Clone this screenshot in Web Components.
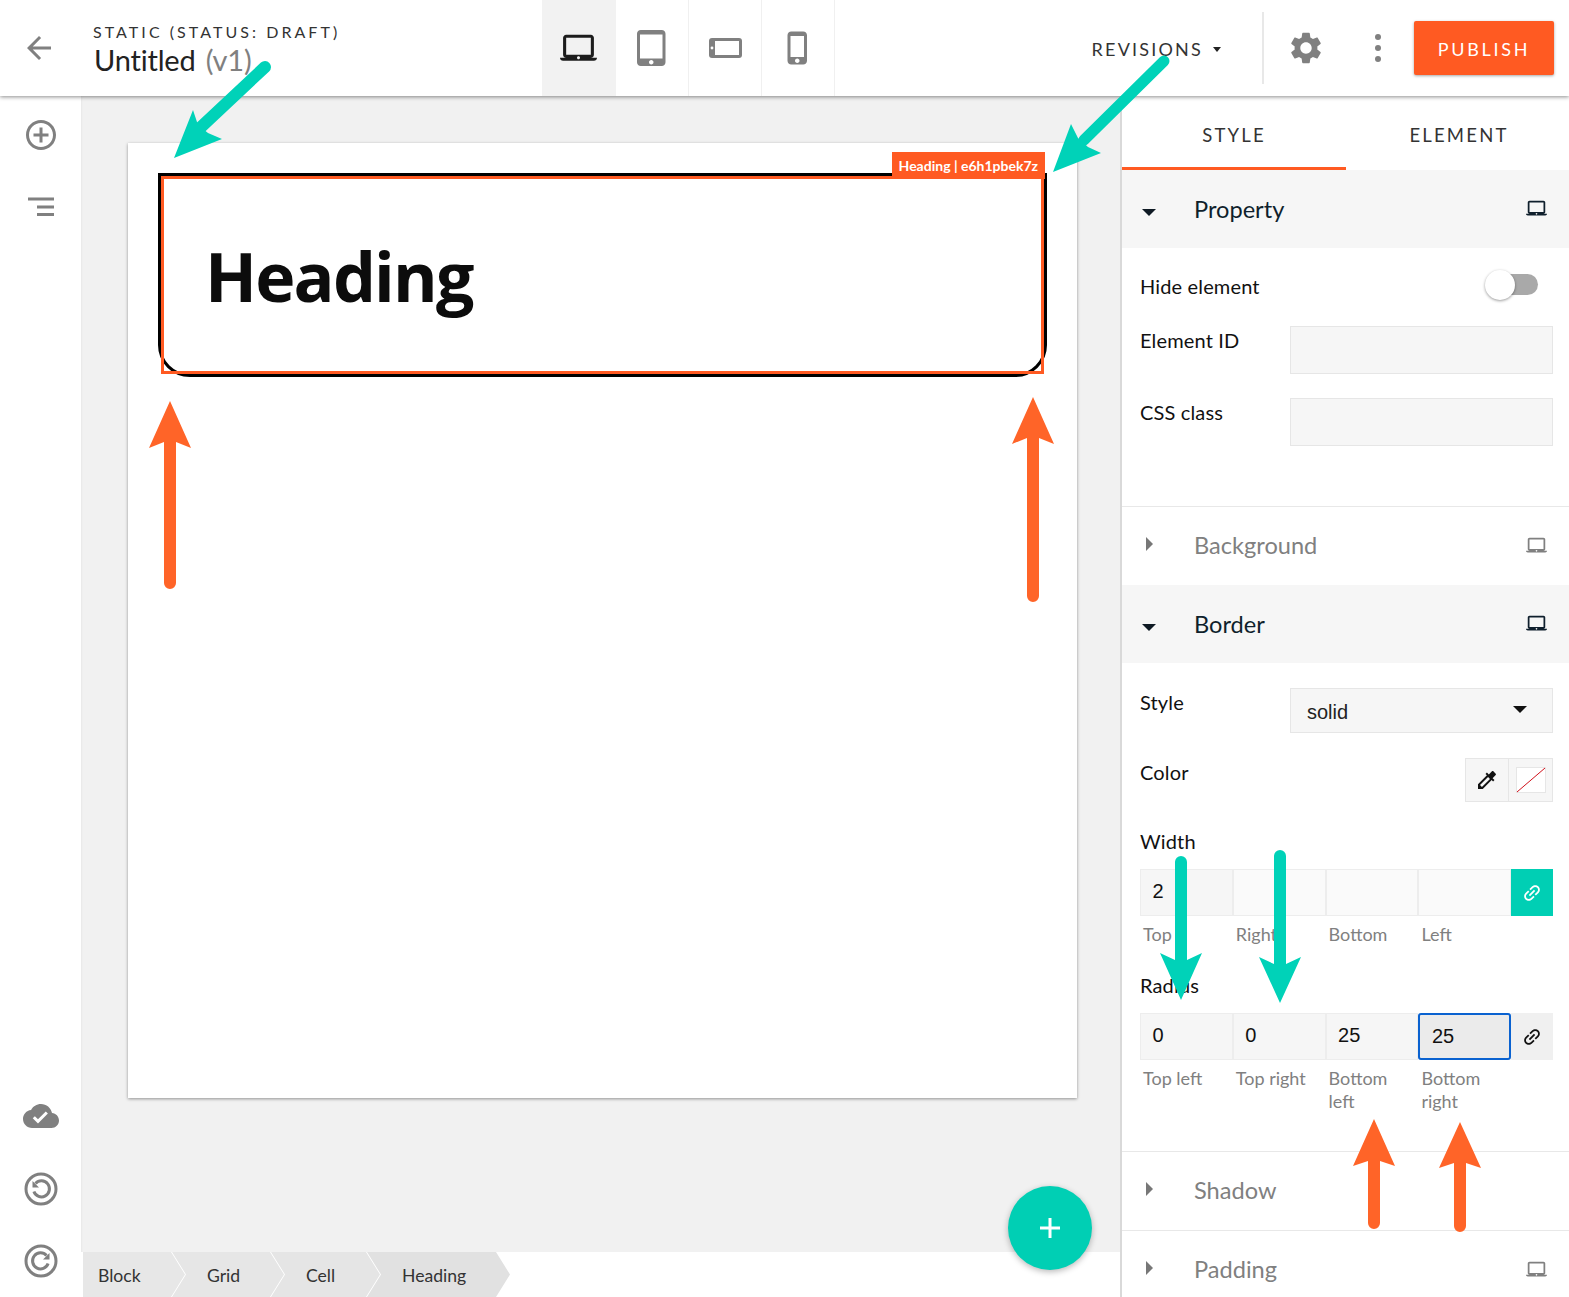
<!DOCTYPE html>
<html>
<head>
<meta charset="utf-8">
<title>Editor</title>
<style>
html,body{margin:0;height:1297px;overflow:hidden;background:#fff;}
body{font-family:"Lato","Noto Sans",sans-serif;color:#111;}
</style>
</head>
<body>
<editor-app></editor-app>
<script>
const UI_FONT = '"Lato","Noto Sans",sans-serif';

// iconos material, todos en caja de 24
const ICONOS = {
    back: 'M20 11H7.83l5.59-5.59L12 4l-8 8 8 8 1.41-1.41L7.83 13H20v-2z',
    add: 'M13 7h-2v4H7v2h4v4h2v-4h4v-2h-4V7zm-1-5C6.48 2 2 6.48 2 12s4.48 10 10 10 10-4.48 10-10S17.52 2 12 2zm0 18c-4.41 0-8-3.59-8-8s3.59-8 8-8 8 3.59 8 8-3.59 8-8 8z',
    laptop: 'M20 18c1.1 0 1.99-.9 1.99-2L22 5c0-1.1-.9-2-2-2H4c-1.1 0-2 .9-2 2v11c0 1.1.9 2 2 2H0c0 1.1.9 2 2 2h20c1.1 0 2-.9 2-2h-4zM4 5h16v11H4V5zm8 14c-.55 0-1-.45-1-1s.45-1 1-1 1 .45 1 1-.45 1-1 1z',
    tablet: 'M18.5 0h-14C3.12 0 2 1.12 2 2.5v19C2 22.88 3.12 24 4.5 24h14c1.38 0 2.5-1.12 2.5-2.5v-19C21 1.12 19.88 0 18.5 0zm-7 23c-.83 0-1.5-.67-1.5-1.5s.67-1.5 1.5-1.5 1.5.67 1.5 1.5-.67 1.5-1.5 1.5zm7.5-4H4V3h15v16z',
    phone: 'M15.5 1h-8C6.12 1 5 2.12 5 3.5v17C5 21.88 6.12 23 7.5 23h8c1.38 0 2.5-1.12 2.5-2.5v-17C18 2.12 16.88 1 15.5 1zm-4 21c-.83 0-1.5-.67-1.5-1.5s.67-1.5 1.5-1.5 1.5.67 1.5 1.5-.67 1.5-1.5 1.5zm4.5-4H7V4h9v14z',
    gear: 'M19.14 12.94c.04-.3.06-.61.06-.94 0-.32-.02-.64-.07-.94l2.03-1.58c.18-.14.23-.41.12-.61l-1.92-3.32c-.12-.22-.37-.29-.59-.22l-2.39.96c-.5-.38-1.03-.7-1.62-.94l-.36-2.54c-.04-.24-.24-.41-.48-.41h-3.84c-.24 0-.43.17-.47.41l-.36 2.54c-.59.24-1.13.57-1.62.94l-2.39-.96c-.22-.08-.47 0-.59.22L2.74 8.87c-.12.21-.08.47.12.61l2.03 1.58c-.05.3-.09.63-.09.94s.02.64.07.94l-2.03 1.58c-.18.14-.23.41-.12.61l1.92 3.32c.12.22.37.29.59.22l2.39-.96c.5.38 1.03.7 1.62.94l.36 2.54c.05.24.24.41.48.41h3.84c.24 0 .44-.17.47-.41l.36-2.54c.59-.24 1.13-.56 1.62-.94l2.39.96c.22.08.47 0 .59-.22l1.92-3.32c.12-.22.07-.47-.12-.61l-2.01-1.58zM12 15.6c-1.98 0-3.6-1.62-3.6-3.6s1.62-3.6 3.6-3.6 3.6 1.62 3.6 3.6-1.62 3.6-3.6 3.6z',
    cloud: 'M19.35 10.04C18.67 6.59 15.64 4 12 4 9.11 4 6.6 5.64 5.35 8.04 2.34 8.36 0 10.91 0 14c0 3.31 2.69 6 6 6h13c2.76 0 5-2.24 5-5 0-2.64-2.05-4.78-4.65-4.96zM10 17l-3.5-3.5 1.41-1.41L10 14.17 15.18 9l1.41 1.41L10 17z',
    dropper: 'M20.71 5.63l-2.34-2.34c-.39-.39-1.02-.39-1.41 0l-3.12 3.12-1.93-1.91-1.41 1.41 1.42 1.42L3 16.25V21h4.75l8.92-8.92 1.42 1.42 1.41-1.41-1.92-1.92 3.12-3.12c.4-.4.4-1.03.01-1.42zM6.92 19L5 17.08l8.06-8.06 1.92 1.92L6.92 19z',
    link: 'M3.9 12c0-1.71 1.39-3.1 3.1-3.1h4V7H7c-2.76 0-5 2.24-5 5s2.24 5 5 5h4v-1.9H7c-1.71 0-3.1-1.39-3.1-3.1zM8 13h8v-2H8v2zm9-6h-4v1.9h4c1.71 0 3.1 1.39 3.1 3.1s-1.39 3.1-3.1 3.1h-4V17h4c2.76 0 5-2.24 5-5s-2.24-5-5-5z'
};

class UiIcon extends HTMLElement {
    connectedCallback(){
        const size = this.getAttribute('size') || 24;
        const color = this.getAttribute('color') || '#808080';
        const rot = this.getAttribute('rotate') || 0;
        const d = ICONOS[this.getAttribute('name')];
        const shadow = this.attachShadow({mode: 'open'});
        shadow.innerHTML = `
            <style>
                :host{display:inline-flex;width:${size}px;height:${size}px;flex:none;}
                svg{width:100%;height:100%;display:block;transform:rotate(${rot}deg);}
            </style>
            <svg viewBox="0 0 24 24"><path fill="${color}" d="${d}"/></svg>`;
    }
}
customElements.define('ui-icon', UiIcon);

const templateHeader = document.createElement('template');
templateHeader.innerHTML = `
    <style>
        :host{display:flex;height:96px;background:#fff;box-shadow:0 1px 4px rgba(0,0,0,.45);position:relative;z-index:2;align-items:stretch;}
        .back{width:93px;display:flex;align-items:center;padding-left:21px;box-sizing:border-box;}
        .titulo{width:449px;padding-top:21px;box-sizing:border-box;}
        .status{font-size:16px;line-height:22px;letter-spacing:3.05px;color:#333;white-space:nowrap;}
        .nombre{font-size:29px;line-height:34px;letter-spacing:-.2px;color:#222;margin-left:1px;white-space:nowrap;}
        .nombre span{color:#808080;margin-left:3px;}
        .devices{display:flex;}
        .dev{width:72px;border-right:1px solid #f0f0f0;display:flex;align-items:center;justify-content:center;}
        .dev.on{width:73px;background:#f2f2f2;border-right-color:#f2f2f2;}
        .resto{flex:1;display:flex;align-items:center;justify-content:flex-end;}
        .rev{font-size:18px;letter-spacing:2.2px;padding-top:2px;color:#333;display:flex;align-items:center;gap:10px;white-space:nowrap;margin-right:41px;}
        .rev i{width:0;height:0;border:4.5px solid transparent;border-top:5px solid #222;border-bottom:0;}
        .sep{width:2px;height:72px;background:#e8e8e8;margin-right:23px;}
        .dots{margin:0 33px 0 50px;display:flex;flex-direction:column;gap:5px;}
        .dots i{width:6px;height:6px;border-radius:50%;background:#808080;}
        .pub{width:140px;height:54px;box-sizing:border-box;padding-top:2px;margin-right:15px;background:#ff5a22;border-radius:2px;color:#fff;font-size:18px;letter-spacing:2.7px;display:flex;align-items:center;justify-content:center;box-shadow:0 1px 3px rgba(0,0,0,.35);}
        svg{display:block;}
    </style>
    <div class="back"><ui-icon name="back" size="36"></ui-icon></div>
    <div class="titulo">
        <div class="status">STATIC (STATUS: DRAFT)</div>
        <div class="nombre">Untitled <span>(v1)</span></div>
    </div>
    <div class="devices">
        <div class="dev on"><ui-icon name="laptop" size="37" color="#1c1c1c"></ui-icon></div>
        <div class="dev"><ui-icon name="tablet" size="36"></ui-icon></div>
        <div class="dev"><svg width="33" height="20" viewBox="0 0 33 20"><rect width="33" height="20" rx="3" fill="#808080"/><rect x="6" y="3" width="24" height="14" fill="#fff"/><circle cx="3" cy="10" r="1.4" fill="#fff"/></svg></div>
        <div class="dev"><ui-icon name="phone" size="36"></ui-icon></div>
    </div>
    <div class="resto">
        <div class="rev">REVISIONS <i></i></div>
        <div class="sep"></div>
        <ui-icon name="gear" size="38"></ui-icon>
        <div class="dots"><i></i><i></i><i></i></div>
        <div class="pub">PUBLISH</div>
    </div>`;

class EditorHeader extends HTMLElement {
    connectedCallback(){
        this.attachShadow({mode: 'open'}).appendChild(templateHeader.content.cloneNode(true));
    }
}
customElements.define('editor-header', EditorHeader);

const templateRail = document.createElement('template');
templateRail.innerHTML = `
    <style>
        :host{display:flex;flex-direction:column;width:81px;background:#fff;align-items:center;box-sizing:border-box;padding:21px 0 10px;}
        .it{height:72px;width:36px;display:flex;align-items:flex-start;justify-content:center;}
        .abajo{margin-top:auto;}
        svg{display:block;}
    </style>
    <div class="it"><ui-icon name="add" size="36"></ui-icon></div>
    <div class="it">
        <svg width="36" height="36" viewBox="0 0 36 36"><path d="M5 10h26M14 18h17M14 25.5h17" fill="none" stroke="#808080" stroke-width="3"/></svg>
    </div>
    <div class="abajo">
        <div class="it" style="height:73px"><ui-icon name="cloud" size="36"></ui-icon></div>
        <div class="it"><svg width="36" height="36" viewBox="0 0 36 36" fill="none" stroke="#808080" stroke-width="3"><circle cx="18" cy="18" r="15"/><path d="M12.5 12.5a8 8 0 1 1-1.6 8"/><path d="M9.5 10v6.5H16" stroke="none" fill="#808080"/></svg></div>
        <div class="it" style="height:44px"><svg width="36" height="36" viewBox="0 0 36 36" fill="none" stroke="#808080" stroke-width="3"><circle cx="18" cy="18" r="15"/><path d="M23.5 12.5a8 8 0 1 0 1.6 8"/><path d="M26.5 10v6.5H20" stroke="none" fill="#808080"/></svg></div>
    </div>`;

class EditorRail extends HTMLElement {
    connectedCallback(){
        this.attachShadow({mode: 'open'}).appendChild(templateRail.content.cloneNode(true));
    }
}
customElements.define('editor-rail', EditorRail);

const templateHeading = document.createElement('template');
templateHeading.innerHTML = `
    <style>
        :host{display:block;position:relative;height:204px;box-sizing:border-box;border:3px solid #000;border-radius:0 0 32px 32px;}
        h1{margin:0;height:100%;display:flex;align-items:center;padding-left:44px;padding-top:2px;box-sizing:border-box;font:700 68px/1 "Open Sans",sans-serif;color:#0c0c0c;letter-spacing:-1.8px;}
        .marco{position:absolute;inset:0;border:3px solid #ff5a22;pointer-events:none;}
        .tag{position:absolute;right:-1px;top:-24px;height:27px;padding:0 7px;background:#ff5a22;color:#fff;font-size:14px;font-weight:700;line-height:27px;white-space:nowrap;}
    </style>
    <h1>Heading</h1>
    <div class="marco"></div>
    <div class="tag">Heading | e6h1pbek7z</div>`;

class HeadingBlock extends HTMLElement {
    connectedCallback(){
        this.attachShadow({mode: 'open'}).appendChild(templateHeading.content.cloneNode(true));
    }
}
customElements.define('heading-block', HeadingBlock);

const templateCrumbs = document.createElement('template');
templateCrumbs.innerHTML = `
    <style>
        :host{display:flex;height:45px;background:#fff;padding-left:2px;flex:none;}
        .c{height:45px;box-sizing:border-box;font-size:17.6px;line-height:47px;color:#333;margin-left:-13px;
           clip-path:polygon(0 0,calc(100% - 14px) 0,100% 50%,calc(100% - 14px) 100%,0 100%,14px 50%);}
        .c.primero{margin-left:0;width:102px;padding-left:15px;background:#e7e7e7;clip-path:polygon(0 0,calc(100% - 14px) 0,100% 50%,calc(100% - 14px) 100%,0 100%);}
    </style>
    <div class="c primero">Block</div>
    <div class="c" style="width:112px;padding-left:35px;background:#e6e6e6">Grid</div>
    <div class="c" style="width:109px;padding-left:35px;background:#e5e5e5">Cell</div>
    <div class="c" style="width:143px;padding-left:35px;background:#e1e1e1">Heading</div>`;

class CrumbBar extends HTMLElement {
    connectedCallback(){
        this.attachShadow({mode: 'open'}).appendChild(templateCrumbs.content.cloneNode(true));
    }
}
customElements.define('crumb-bar', CrumbBar);

const templateCanvas = document.createElement('template');
templateCanvas.innerHTML = `
    <style>
        :host{display:flex;flex-direction:column;flex:1;min-width:0;background:#f1f1f1;position:relative;box-shadow:inset 1px 0 2px rgba(0,0,0,.04);}
        .zona{flex:1;padding:47px 43px 0 47px;}
        .hoja{height:955px;background:#fff;box-shadow:0 1px 3px rgba(0,0,0,.4);padding:30px 30px 0;box-sizing:border-box;}
        .fab{position:absolute;left:927px;top:1090px;width:84px;height:84px;border-radius:50%;background:#00cfb4;box-shadow:0 2px 6px rgba(0,0,0,.28);display:flex;align-items:center;justify-content:center;}
        .fab svg{display:block;}
    </style>
    <div class="zona"><div class="hoja"><heading-block></heading-block></div></div>
    <crumb-bar></crumb-bar>
    <div class="fab"><svg width="24" height="24" viewBox="0 0 24 24"><path d="M2 12h20M12 2v20" stroke="#fff" stroke-width="3"/></svg></div>`;

class EditorCanvas extends HTMLElement {
    connectedCallback(){
        this.attachShadow({mode: 'open'}).appendChild(templateCanvas.content.cloneNode(true));
    }
}
customElements.define('editor-canvas', EditorCanvas);

class PropSection extends HTMLElement {
    connectedCallback(){
        const abierto = this.hasAttribute('open');
        const sinDevice = this.hasAttribute('nodevice');
        const titulo = this.getAttribute('title');
        this.removeAttribute('title');
        const shadow = this.attachShadow({mode: 'open'});
        shadow.innerHTML = `
            <style>
                :host{display:block;}
                .cab{height:${abierto ? 78 : 79}px;display:flex;align-items:center;box-sizing:border-box;padding:0 22px ${abierto ? 1 : 2}px 20px;background:${abierto ? '#f6f6f6' : '#fff'};border-top:${abierto ? '0' : '1px solid #e8e8e8'};}
                .caret{width:52px;flex:none;}
                .caret i{display:block;width:0;height:0;}
                .caret i.ab{border:7px solid transparent;border-top:7px solid #0f1a24;border-bottom:0;margin-top:7px;}
                .caret i.ce{border:7px solid transparent;border-left:7px solid #777;border-right:0;margin:-3px 0 0 4px;}
                .nom{flex:1;font-size:23.6px;color:${abierto ? '#0f1f2c' : '#808080'};}
            </style>
            <div class="cab">
                <div class="caret"><i class="${abierto ? 'ab' : 'ce'}"></i></div>
                <div class="nom">${titulo}</div>
                ${sinDevice ? '' : `<ui-icon name="laptop" size="21" color="${abierto ? '#0f1f2c' : '#808080'}"></ui-icon>`}
            </div>
            <slot></slot>`;
    }
}
customElements.define('prop-section', PropSection);

class PropField extends HTMLElement {
    connectedCallback(){
        const alto = this.getAttribute('h') || 48;
        const shadow = this.attachShadow({mode: 'open'});
        shadow.innerHTML = `
            <style>
                :host{display:flex;font-size:20px;line-height:28px;letter-spacing:.15px;color:#111;}
                .lab{width:150px;flex:none;}
                .caja{flex:1;height:${alto}px;box-sizing:border-box;background:#f6f6f6;border:1px solid #e6e6e6;}
            </style>
            <div class="lab">${this.getAttribute('label')}</div>
            <div class="caja"><slot></slot></div>`;
    }
}
customElements.define('prop-field', PropField);

class QuadInput extends HTMLElement {
    connectedCallback(){
        const valores = this.getAttribute('values').split(',');
        const textos = this.getAttribute('captions').split(',');
        const enlazado = this.hasAttribute('linked');
        const foco = parseInt(this.getAttribute('focus') ?? '-1');
        const shadow = this.attachShadow({mode: 'open'});
        const celdas = valores.map((v, i) => `<div class="cel ${v ? 'llena' : ''} ${i === foco ? 'foco' : ''}">${v}</div>`).join('');
        const caps = textos.map(t => `<div class="cap">${t}</div>`).join('');
        shadow.innerHTML = `
            <style>
                :host{display:block;}
                .fila{display:grid;grid-template-columns:92.8px 92.8px 92.8px 92.8px 41.8px;height:47px;}
                .cel{box-sizing:border-box;border:1.5px solid #ededed;background:#fafafa;font:20px/43px "Liberation Sans",sans-serif;color:#111;padding-left:11.5px;}
                .cel.llena{background:#f6f6f6;}
                .cel.foco{border:2px solid #0a62d0;border-radius:3px;background:#ebebeb;line-height:42px;}
                .lnk{display:flex;align-items:center;justify-content:center;background:${enlazado ? '#00cfb4' : '#f0f0f0'};}
                .caps{display:grid;grid-template-columns:92.8px 92.8px 92.8px 92.8px 41.8px;margin-top:7px;}
                .cap{padding:0 14px 0 3px;font-size:18px;line-height:23px;color:#808080;}
            </style>
            <div class="fila">${celdas}<div class="lnk"><ui-icon name="link" size="22" rotate="-45" color="${enlazado ? '#fff' : '#111'}"></ui-icon></div></div>
            <div class="caps">${caps}</div>`;
    }
}
customElements.define('quad-input', QuadInput);

const templatePanel = document.createElement('template');
templatePanel.innerHTML = `
    <style>
        :host{display:block;width:449px;flex:none;background:#fff;border-left:2px solid #d9d9d9;box-sizing:border-box;overflow:hidden;box-shadow:-1px 0 2px rgba(0,0,0,.06);}
        .tabs{display:flex;height:74px;}
        .tab{flex:1;text-align:center;font-size:18.5px;letter-spacing:2.2px;line-height:78px;color:#333;box-sizing:border-box;}
        .tab.on{flex:0 0 224px;border-bottom:3px solid #ff5a22;}
        .tab + .tab{padding-left:3px;}
        .cuerpo{padding:0 16px 0 18px;}
        .hide{display:flex;align-items:center;justify-content:space-between;height:38px;padding-top:19px;margin-bottom:21px;font-size:20px;letter-spacing:.15px;color:#111;}
        .sw{position:relative;width:53px;height:22px;margin-right:15px;}
        .sw .pista{position:absolute;right:0;top:-1px;width:40px;height:21px;border-radius:11px;background:#a9a9a9;}
        .sw .bola{position:absolute;left:0;top:-5px;width:30px;height:30px;border-radius:50%;background:#fff;box-shadow:0 1px 3px rgba(0,0,0,.4);}
        prop-field + prop-field{margin-top:24px;}
        .sel{display:flex;align-items:center;justify-content:space-between;height:100%;box-sizing:border-box;padding:4px 25px 0 16px;font:20px "Liberation Sans",sans-serif;color:#222;letter-spacing:0;}
        .sel i{width:0;height:0;border:7.5px solid transparent;border-top:7px solid #111;border-bottom:0;margin-top:-6px;}
        .color{display:flex;justify-content:space-between;font-size:20px;line-height:28px;letter-spacing:.15px;margin-top:25px;height:44px;}
        .pares{display:flex;}
        .par{box-sizing:border-box;width:44px;height:44px;background:#f6f6f6;border:1px solid #e6e6e6;display:flex;align-items:center;justify-content:center;}
        .par + .par{border-left:0;}
        .tit{font-size:20px;line-height:30px;letter-spacing:.15px;color:#111;}
    </style>
    <div class="tabs">
        <div class="tab on">STYLE</div>
        <div class="tab">ELEMENT</div>
    </div>
    <prop-section title="Property" open>
        <div class="cuerpo" style="height:258px">
            <div class="hide"><span>Hide element</span><div class="sw"><div class="pista"></div><div class="bola"></div></div></div>
            <prop-field label="Element ID"></prop-field>
            <prop-field label="CSS class"></prop-field>
        </div>
    </prop-section>
    <prop-section title="Background"></prop-section>
    <prop-section title="Border" open>
        <div class="cuerpo" style="height:488px;padding-top:25px;box-sizing:border-box">
            <prop-field label="Style" h="45"><div class="sel">solid<i></i></div></prop-field>
            <div class="color">
                <span>Color</span>
                <div class="pares">
                    <div class="par"><ui-icon name="dropper" size="24" color="#111"></ui-icon></div>
                    <div class="par"><svg width="30" height="26" viewBox="0 0 30 26"><rect x=".5" y=".5" width="29" height="25" fill="#fff" stroke="#e6e6e6"/><path d="M1 25L29 1" stroke="#d0111b" stroke-width="1"/></svg></div>
                </div>
            </div>
            <div class="tit" style="margin-top:24px;margin-bottom:13px">Width</div>
            <quad-input values="2,,," captions="Top,Right,Bottom,Left" linked></quad-input>
            <div class="tit" style="margin-top:24px;margin-bottom:13px">Radius</div>
            <quad-input values="0,0,25,25" captions="Top left,Top right,Bottom left,Bottom right" focus="3"></quad-input>
        </div>
    </prop-section>
    <prop-section title="Shadow" nodevice></prop-section>
    <prop-section title="Padding"></prop-section>`;

class PropPanel extends HTMLElement {
    connectedCallback(){
        this.attachShadow({mode: 'open'}).appendChild(templatePanel.content.cloneNode(true));
    }
}
customElements.define('prop-panel', PropPanel);

// flechas dibujadas encima de la captura
const TEAL = '#00d2b8';
const NARANJA = '#ff6428';

function flechaV(x, cola, punta, base, muesca, color, mitad){
    return `<path fill="${color}" d="M${x} ${punta}L${x + mitad} ${base}L${x + 6} ${muesca}V${cola}a6 6 0 0 1-12 0V${muesca}L${x - mitad} ${base}Z"/>`;
}

class AnnotArrows extends HTMLElement {
    connectedCallback(){
        const shadow = this.attachShadow({mode: 'open'});
        shadow.innerHTML = `
            <style>
                :host{position:absolute;left:0;top:0;width:1569px;height:1297px;pointer-events:none;z-index:5;}
                svg{display:block;}
            </style>
            <svg width="1569" height="1297" viewBox="0 0 1569 1297">
                <path d="M265 67L200 128" stroke="${TEAL}" stroke-width="12" stroke-linecap="round"/>
                <path fill="${TEAL}" d="M174 158L193 110L198 125L208 133L222 139Z"/>
                <path d="M1164 61L1084 140" stroke="${TEAL}" stroke-width="11" stroke-linecap="round"/>
                <path fill="${TEAL}" d="M1053 172L1071 124L1078 138L1088 147L1101 153Z"/>
                ${flechaV(170, 583, 401, 448, 442, NARANJA, 21)}
                ${flechaV(1033, 596, 397, 444, 438, NARANJA, 21)}
                ${flechaV(1374, 1223, 1119, 1166, 1161, NARANJA, 21)}
                ${flechaV(1460, 1226, 1122, 1168, 1163, NARANJA, 21)}
                <path fill="${TEAL}" d="M1181 1000L1160 953L1175 960V862a6 6 0 0 1 12 0V960L1202 953Z"/>
                <path fill="${TEAL}" d="M1280 1003L1259 957L1274 964V856a6 6 0 0 1 12 0V964L1301 957Z"/>
            </svg>`;
    }
}
customElements.define('annot-arrows', AnnotArrows);

const templateApp = document.createElement('template');
templateApp.innerHTML = `
    <style>
        :host{display:block;position:relative;width:1569px;height:1297px;overflow:hidden;font-family:${UI_FONT};}
        .cuerpo{display:flex;height:1201px;}
    </style>
    <editor-header></editor-header>
    <div class="cuerpo">
        <editor-rail></editor-rail>
        <editor-canvas></editor-canvas>
        <prop-panel></prop-panel>
    </div>
    <annot-arrows></annot-arrows>`;

class EditorApp extends HTMLElement {
    connectedCallback(){
        this.attachShadow({mode: 'open'}).appendChild(templateApp.content.cloneNode(true));
    }
}
customElements.define('editor-app', EditorApp);
</script>
</body>
</html>
